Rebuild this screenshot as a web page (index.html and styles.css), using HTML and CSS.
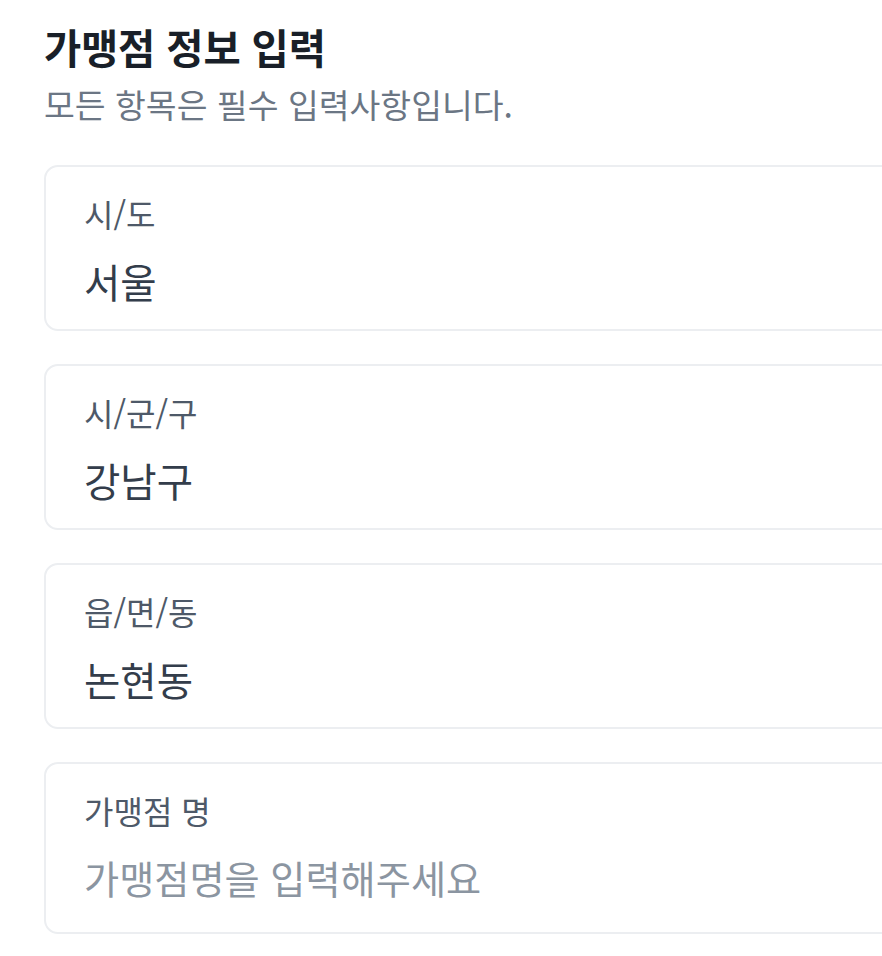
FILE: index.html
```html
<!DOCTYPE html>
<html lang="ko">
<head>
<meta charset="utf-8">
<title>가맹점 정보 입력</title>
<link rel="stylesheet" href="styles.css">
</head>
<body>
<main class="page">
  <header class="head">
    <h1 class="title">가맹점 정보 입력</h1>
    <p class="subtitle">모든 항목은 필수 입력사항입니다.</p>
  </header>
  <form class="form">
    <div class="field">
      <span class="label">시/도</span>
      <span class="value">서울</span>
    </div>
    <div class="field">
      <span class="label">시/군/구</span>
      <span class="value">강남구</span>
    </div>
    <div class="field">
      <span class="label">읍/면/동</span>
      <span class="value">논현동</span>
    </div>
    <label class="field field-input">
      <span class="label">가맹점 명</span>
      <input class="input" type="text" placeholder="가맹점명을 입력해주세요">
    </label>
  </form>
</main>
</body>
</html>
```
FILE: styles.css
```css
* { box-sizing: border-box; }
html, body { margin: 0; padding: 0; background: #ffffff; }
body {
  font-family: "Noto Sans CJK KR", "Noto Sans", sans-serif;
  overflow: hidden;
}
.page {
  padding: 22px 0 0 44px;
  width: 940px;
}
.head { display: flex; flex-direction: column; gap: 10px; }
.title {
  margin: 0;
  font-size: 40.5px;
  line-height: 50px;
  font-weight: 700;
  color: #191f28;
  letter-spacing: -0.2px;
}
.subtitle {
  margin: 0;
  font-size: 33.5px;
  line-height: 44px;
  font-weight: 400;
  color: #6b7684;
}
.form {
  margin-top: 39px;
  display: flex;
  flex-direction: column;
  gap: 33px;
}
.field {
  display: flex;
  flex-direction: column;
  gap: 19px;
  border: 2px solid #eceef1;
  border-radius: 14px;
  padding: 24px 38px 21px;
  background: #fff;
}
.label {
  font-size: 32px;
  line-height: 44px;
  color: #4e5968;
}
.value {
  font-size: 39.5px;
  line-height: 54px;
  color: #333d4b;
}
.field-input { padding-bottom: 27px; }
.input {
  border: 0;
  outline: 0;
  padding: 0;
  margin: 0;
  font-family: inherit;
  font-size: 38.2px;
  line-height: 54px;
  height: 54px;
  color: #333d4b;
  background: transparent;
  width: 100%;
}
.input::placeholder { color: #8b95a1; }
```
